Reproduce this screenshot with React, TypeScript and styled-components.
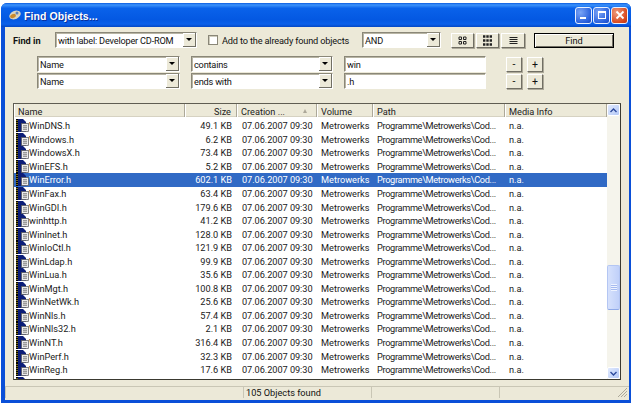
import React from 'react';
import styled, { createGlobalStyle } from 'styled-components';

const GlobalStyle = createGlobalStyle`
    html, body {
        margin: 0;
        background: #fff;
    }
    body {
        width: 634px;
        height: 406px;
        overflow: hidden;
        font-family: Roboto, "Liberation Sans", sans-serif;
        font-size: 9.2px;
        color: #111;
    }
`;

const Window = styled.div`
    width: 630px;
    height: 400px;
    margin: 3px 0 0 1px;
    border-radius: 6px 6px 0 0;
    background: #0a4fd8;
    display: flex;
    flex-direction: column;
    overflow: hidden;
`;

const TitleBar = styled.div`
    height: 24px;
    flex: none;
    display: flex;
    align-items: center;
    padding: 0 3px 0 7px;
    background: linear-gradient(180deg, #0a5be0 0%, #3d93fb 8%, #0a62ea 22%, #0458e2 70%, #0a60ea 88%, #0347c4 100%);
`;

const TitleText = styled.div`
    flex: 1;
    margin-left: 2px;
    padding-top: 1px;
    color: #fff;
    font-family: "Liberation Sans", sans-serif;
    font-size: 10.5px;
    font-weight: 700;
    letter-spacing: 0.1px;
    text-shadow: 1px 1px 0 #0a2f9c;
`;

const TitleButton = styled.div<{ $danger?: boolean }>`
    width: 17px;
    height: 17px;
    margin-left: 1px;
    box-sizing: border-box;
    border: 1px solid #e8f0ff;
    border-radius: 3px;
    display: flex;
    align-items: center;
    justify-content: center;
    background: ${p => p.$danger
        ? 'radial-gradient(circle at 30% 30%, #ee9a7c, #d9491f 70%, #b83210)'
        : 'radial-gradient(circle at 30% 30%, #7aa4f5, #2b62dd 70%, #1a46c0)'};
`;

const Client = styled.div`
    flex: 1;
    margin: 0 2px 3px 4px;
    background: #ece9d8;
    display: flex;
    flex-direction: column;
    min-height: 0;
`;

const TopRow = styled.div`
    display: flex;
    align-items: center;
    height: 16px;
    margin: 5px 0 0 8px;
`;

const FindLabel = styled.div`
    width: 42px;
    font-weight: 700;
`;

const ComboBox = styled.div<{ $width: number }>`
    width: ${p => p.$width}px;
    height: 16px;
    box-sizing: border-box;
    flex: none;
    display: flex;
    align-items: center;
    background: #fff;
    border-top: 1px solid #8a8778;
    border-left: 1px solid #8a8778;
    border-right: 1px solid #fff;
    border-bottom: 1px solid #fff;
    box-shadow: inset 1px 1px 0 #b8b5a4;
`;

const ComboText = styled.div`
    flex: 1;
    padding-left: 2px;
    letter-spacing: -0.2px;
    white-space: nowrap;
    overflow: hidden;
`;

const ComboArrow = styled.div`
    width: 13px;
    height: 14px;
    flex: none;
    background: #ece9d8;
    border-right: 1px solid #716f64;
    border-bottom: 1px solid #716f64;
    box-sizing: border-box;
    box-shadow: inset 1px 1px 0 #fff;
    display: flex;
    align-items: center;
    justify-content: center;
    &::after {
        content: '';
        border-left: 3px solid transparent;
        border-right: 3px solid transparent;
        border-top: 3px solid #000;
    }
`;

const CheckBox = styled.div`
    width: 10px;
    height: 10px;
    margin-left: 11px;
    flex: none;
    background: #fff;
    border: 1px solid #8a8778;
    box-sizing: border-box;
    box-shadow: inset 1px 1px 0 #cfccbc;
`;

const CheckLabel = styled.div`
    width: 140px;
    margin-left: 4px;
    flex: none;
    letter-spacing: -0.16px;
    white-space: nowrap;
`;

const RaisedButton = styled.div<{ $width: number; $gap?: number }>`
    width: ${p => p.$width}px;
    height: 15px;
    margin-left: ${p => p.$gap ?? 0}px;
    flex: none;
    box-sizing: border-box;
    display: flex;
    align-items: center;
    justify-content: center;
    font-size: 10.5px;
    background: #ece9d8;
    border-top: 1px solid #fff;
    border-left: 1px solid #fff;
    border-right: 1px solid #716f64;
    border-bottom: 1px solid #716f64;
    box-shadow: 1px 1px 0 #ada99a;
`;

const FindButton = styled(RaisedButton)`
    font-size: 9.2px;
    border: 1px solid #000;
    box-shadow: inset 1px 1px 0 #fff, inset -1px -1px 0 #716f64;
`;

const CriteriaList = styled.div`
    display: flex;
    flex-direction: column;
    gap: 1px;
    margin: 8px 0 0 32px;
`;

const CriteriaRow = styled.div`
    display: flex;
    align-items: center;
`;

const TextField = styled(ComboBox)`
    margin-left: 11px;
`;

const ConditionBox = styled(ComboBox)`
    margin-left: 11px;
`;

const List = styled.div`
    height: 275px;
    margin: 14px 8px 0 8px;
    border: 1px solid #5f5d52;
    border-right-color: #3a3930;
    border-bottom-color: #3a3930;
    background: #fff;
    display: flex;
    overflow: hidden;
    flex: none;
`;

const ListMain = styled.div`
    flex: 1;
    min-width: 0;
    overflow: hidden;
`;

const columns = '171px 52px 80px 56px 132px 1fr';

const HeaderRow = styled.div`
    height: 13px;
    display: grid;
    grid-template-columns: ${columns};
`;

const HeaderCell = styled.div<{ $right?: boolean }>`
    display: flex;
    align-items: center;
    justify-content: ${p => (p.$right ? 'flex-end' : 'space-between')};
    padding: ${p => (p.$right ? '1px 5px 0 4px' : '1px 3px 0 3px')};
    background: #ece9d8;
    color: #222;
    box-sizing: border-box;
    border-right: 1px solid #aca899;
    border-left: 1px solid #fff;
    box-shadow: inset 0 -1px 0 #d6d2c2;
`;

const SortMark = styled.span`
    width: 0;
    height: 0;
    margin-right: 6px;
    border-left: 2px solid transparent;
    border-right: 2px solid transparent;
    border-bottom: 4px solid #aca899;
`;

const Rows = styled.div`
    padding-top: 2px;
`;

const Row = styled.div<{ $selected?: boolean }>`
    height: 13.55px;
    display: grid;
    grid-template-columns: ${columns};
    align-items: center;
    background: ${p => (p.$selected ? '#316ac5' : 'transparent')};
    color: ${p => (p.$selected ? '#fff' : '#1a1a1a')};
`;

const NameCell = styled.div`
    display: flex;
    align-items: center;
    padding-left: 2px;
    white-space: nowrap;
`;

const SizeCell = styled.div`
    text-align: right;
    padding-right: 5px;
`;

const DateCell = styled.div`
    padding-left: 5px;
    letter-spacing: -0.05px;
    white-space: nowrap;
`;

const TextCell = styled.div`
    padding-left: 4px;
    white-space: nowrap;
`;

const PathCell = styled(TextCell)`
    letter-spacing: -0.33px;
`;

const ScrollBar = styled.div`
    width: 13px;
    flex: none;
    display: flex;
    flex-direction: column;
    background: #f5f4ec;
`;

const ScrollButton = styled.div`
    width: 13px;
    height: 12px;
    flex: none;
    border: 1px solid #fff;
    border-radius: 2px;
    box-sizing: border-box;
    background: linear-gradient(135deg, #e1eafe, #b4c8f6);
    display: flex;
    align-items: center;
    justify-content: center;
`;

const ScrollThumb = styled.div`
    height: 45px;
    margin-top: 149px;
    flex: none;
    border: 1px solid #b4c6f3;
    border-bottom-color: #8fa9e8;
    border-radius: 2px;
    box-sizing: border-box;
    background: linear-gradient(90deg, #d6e1fc, #c0d0f9);
    display: flex;
    align-items: center;
    justify-content: center;
    &::after {
        content: '';
        width: 6px;
        height: 7px;
        background: repeating-linear-gradient(180deg, #eef3ff 0 1px, #a6baf0 1px 2px);
    }
`;

const ScrollSpacer = styled.div`
    flex: 1;
`;

const StatusBar = styled.div`
    flex: 1;
    display: grid;
    grid-template-columns: 238px 128px 128px 1fr;
    margin-top: 6px;
    padding-bottom: 2px;
`;

const StatusCell = styled.div`
    display: flex;
    align-items: center;
    padding-left: 2px;
    border-top: 1px solid #c9c6b5;
    border-left: 1px solid #c9c6b5;
    position: relative;
`;

const Grip = styled.svg`
    position: absolute;
    right: 1px;
    bottom: 0;
`;

const FileIcon = () => (
    <svg width="13" height="13" viewBox="0 0 13 13" style={{ flex: 'none' }}>
        <path d="M0 0h7l3 3v10H0z" fill="#0b1d78" />
        <rect x="0" y="0" width="2" height="13" fill="#000" />
        <path d="M1 1v11" stroke="#e6d23a" strokeDasharray="1 1" />
        <rect x="5.5" y="4.5" width="7" height="8" fill="#ececec" stroke="#555" strokeWidth="0.7" />
        <rect x="7" y="6" width="4" height="5" fill="#9a9a9a" />
        <path d="M7 7.5h4M7 9.5h4" stroke="#e6e6e6" strokeWidth="0.6" />
    </svg>
);

const Glyph = ({ d }: { d: string }) => (
    <svg width="11" height="11" viewBox="0 0 11 11">
        <path d={d} fill="none" stroke="#222" strokeWidth="1" />
    </svg>
);

const files: [string, string][] = [
    ['WinDNS.h', '49.1'], ['Windows.h', '6.2'], ['WindowsX.h', '73.4'], ['WinEFS.h', '5.2'],
    ['WinError.h', '602.1'], ['WinFax.h', '63.4'], ['WinGDI.h', '179.6'], ['winhttp.h', '41.2'],
    ['WinInet.h', '128.0'], ['WinIoCtl.h', '121.9'], ['WinLdap.h', '99.9'], ['WinLua.h', '35.6'],
    ['WinMgt.h', '100.8'], ['WinNetWk.h', '25.6'], ['WinNls.h', '57.4'], ['WinNls32.h', '2.1'],
    ['WinNT.h', '316.4'], ['WinPerf.h', '32.3'], ['WinReg.h', '17.6'],
];

const criteria = [
    { condition: 'contains', value: 'win' },
    { condition: 'ends with', value: '.h' },
];

export default function App() {
    return <Window>
        <GlobalStyle />
        <TitleBar>
            <svg width="14" height="12" viewBox="0 0 14 12">
                <ellipse cx="7" cy="6" rx="6" ry="4" transform="rotate(-25 7 6)" fill="#d9d4c0" />
                <ellipse cx="5" cy="7" rx="3" ry="2" transform="rotate(-25 5 7)" fill="#c98a2e" />
                <circle cx="9" cy="4" r="1.5" fill="#5b7fb8" />
            </svg>
            <TitleText>Find Objects...</TitleText>
            <TitleButton>
                <svg width="10" height="10"><rect x="1" y="7" width="6" height="2" fill="#fff" /></svg>
            </TitleButton>
            <TitleButton>
                <svg width="10" height="10"><rect x="1.5" y="1.5" width="7" height="7" fill="none" stroke="#fff" /><rect x="1" y="1" width="8" height="2" fill="#fff" /></svg>
            </TitleButton>
            <TitleButton $danger>
                <svg width="10" height="10"><path d="M1.5 1.5l7 7M8.5 1.5l-7 7" stroke="#fff" strokeWidth="1.8" /></svg>
            </TitleButton>
        </TitleBar>
        <Client>
            <TopRow>
                <FindLabel>Find in</FindLabel>
                <ComboBox $width={142}>
                    <ComboText>with label: Developer CD-ROM</ComboText>
                    <ComboArrow />
                </ComboBox>
                <CheckBox />
                <CheckLabel>Add to the already found objects</CheckLabel>
                <ComboBox $width={79}>
                    <ComboText>AND</ComboText>
                    <ComboArrow />
                </ComboBox>
                <RaisedButton $width={23} $gap={10}>
                    <Glyph d="M2 2h2.5v2.5H2zM6.5 2H9v2.5H6.5zM2 6.5h2.5V9H2zM6.5 6.5H9V9H6.5z" />
                </RaisedButton>
                <RaisedButton $width={23} $gap={2}>
                    <svg width="11" height="11" viewBox="0 0 11 11">
                        <path d="M1 1.5h9M1 5.5h9M1 9.5h9" stroke="#222" strokeWidth="2.4" strokeDasharray="2.4 0.9" fill="none" />
                    </svg>
                </RaisedButton>
                <RaisedButton $width={24} $gap={2}>
                    <Glyph d="M1.5 2.5h8M1.5 4.5h8M1.5 6.5h8M1.5 8.5h8" />
                </RaisedButton>
                <FindButton $width={80} $gap={9}>Find</FindButton>
            </TopRow>
            <CriteriaList>
                {criteria.map(c => <CriteriaRow key={c.condition}>
                    <ComboBox $width={143}>
                        <ComboText>Name</ComboText>
                        <ComboArrow />
                    </ComboBox>
                    <ConditionBox $width={142}>
                        <ComboText>{c.condition}</ComboText>
                        <ComboArrow />
                    </ConditionBox>
                    <TextField $width={142}>
                        <ComboText>{c.value}</ComboText>
                    </TextField>
                    <RaisedButton $width={16} $gap={20}>-</RaisedButton>
                    <RaisedButton $width={16} $gap={5}>+</RaisedButton>
                </CriteriaRow>)}
            </CriteriaList>
            <List>
                <ListMain>
                    <HeaderRow>
                        <HeaderCell>Name</HeaderCell>
                        <HeaderCell $right>Size</HeaderCell>
                        <HeaderCell>Creation ...<SortMark /></HeaderCell>
                        <HeaderCell>Volume</HeaderCell>
                        <HeaderCell>Path</HeaderCell>
                        <HeaderCell>Media Info</HeaderCell>
                    </HeaderRow>
                    <Rows>
                        {files.map(([name, size]) => <Row key={name} $selected={name === 'WinError.h'}>
                            <NameCell><FileIcon />{name}</NameCell>
                            <SizeCell>{size} KB</SizeCell>
                            <DateCell>07.06.2007 09:30</DateCell>
                            <TextCell>Metrowerks</TextCell>
                            <PathCell>Programme\Metrowerks\Cod...</PathCell>
                            <TextCell>n.a.</TextCell>
                        </Row>)}
                        <Row><NameCell><FileIcon /></NameCell></Row>
                    </Rows>
                </ListMain>
                <ScrollBar>
                    <ScrollButton>
                        <svg width="7" height="5"><path d="M0.5 4L3.5 1l3 3" fill="none" stroke="#2d4a9c" strokeWidth="1.4" /></svg>
                    </ScrollButton>
                    <ScrollThumb />
                    <ScrollSpacer />
                    <ScrollButton>
                        <svg width="7" height="5"><path d="M0.5 1L3.5 4l3-3" fill="none" stroke="#2d4a9c" strokeWidth="1.4" /></svg>
                    </ScrollButton>
                </ScrollBar>
            </List>
            <StatusBar>
                <StatusCell />
                <StatusCell>105 Objects found</StatusCell>
                <StatusCell />
                <StatusCell>
                    <Grip width="12" height="12" viewBox="0 0 12 12">
                        <path d="M11 2L2 11M11 5L5 11M11 8L8 11" stroke="#aca899" />
                    </Grip>
                </StatusCell>
            </StatusBar>
        </Client>
    </Window>;
}
